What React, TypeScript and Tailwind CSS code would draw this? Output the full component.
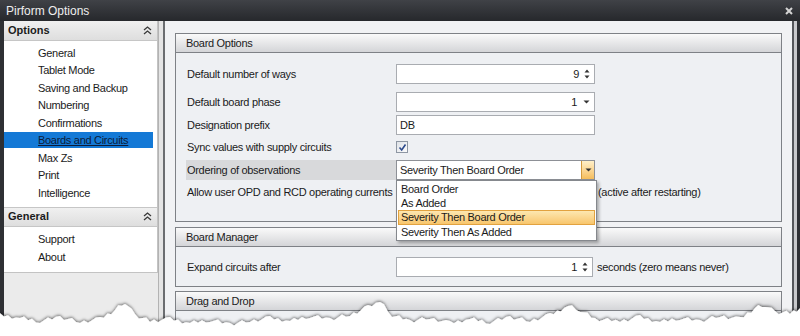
import type { ReactNode } from "react";

const navItems = [
  "General",
  "Tablet Mode",
  "Saving and Backup",
  "Numbering",
  "Confirmations",
  "Boards and Circuits",
  "Max Zs",
  "Print",
  "Intelligence"
];

const orderOptions = ["Board Order", "As Added", "Severity Then Board Order", "Severity Then As Added"];

export default function App() {
  return (
    <div className="relative h-[336px] w-[800px] overflow-hidden bg-[#2e3034] font-['Liberation_Sans',Arial,sans-serif] text-[11px] tracking-[-0.3px] text-[#1b1b1b]">
      <div className="flex h-[21px] items-center justify-between bg-gradient-to-b from-[#404247] to-[#26282c] pl-[6px] pr-[7px] text-[12px] tracking-normal text-[#eeeeee]">
        <span>Pirform Options</span>
        <CloseIcon />
      </div>

      <div className="flex h-[315px] pl-[4px]">
        <Sidebar />
        <div className="w-[7px] border-l border-r-2 border-l-[#b3b3b3] border-r-[#6b6d70] bg-[#e4e4e4]" />

        <div className="flex w-[627px] flex-col bg-[#f1f2f4] px-[10px] pt-[12px]">
          <Group title="Board Options">
            <div className="flex h-[168px] flex-col pl-[10px] pt-[11px]">
              <Row label="Default number of ways">
                <NumberBox value="9" />
              </Row>
              <Row label="Default board phase" className="mt-[8px]">
                <div className="flex h-[20px] w-[199px] items-center justify-end gap-[6px] border border-[#a9acb1] bg-white pr-[4px]">
                  <span>1</span>
                  <DownArrow />
                </div>
              </Row>
              <Row label="Designation prefix" className="mt-[3px]">
                <div className="flex h-[20px] w-[199px] items-center border border-[#a9acb1] bg-white pl-[3px]">DB</div>
              </Row>
              <Row label="Sync values with supply circuits" className="mt-[2px]">
                <Checkbox />
              </Row>
              <Row label="Ordering of observations" className="mt-[3px]" highlight>
                <div className="flex h-[20px] w-[199px] items-center justify-between border border-[#8d9096] bg-white pl-[3px]">
                  <span>Severity Then Board Order</span>
                  <div className="flex h-[18px] w-[13px] items-center justify-center border-l border-[#d39a3c] bg-gradient-to-b from-[#fff0c8] to-[#f5bd5a]">
                    <DownArrow />
                  </div>
                </div>
              </Row>
              <Row label="Allow user OPD and RCD operating currents" className="mt-[2px]">
                <div className="w-[199px]" />
                <span className="ml-[3px]">(active after restarting)</span>
              </Row>
            </div>
          </Group>

          <Group title="Board Manager" className="mt-[5px]">
            <div className="flex flex-col pb-[9px] pl-[10px] pt-[10px]">
              <Row label="Expand circuits after">
                <NumberBox value="1" width="w-[197px]" />
                <span className="ml-[4px]">seconds (zero means never)</span>
              </Row>
            </div>
          </Group>

          <Group title="Drag and Drop" className="mt-[4px] flex-1">
            <div className="h-[40px]" />
          </Group>
        </div>

        <div className="w-[8px] border-l-2 border-r-[3px] border-l-[#55575b] border-r-[#2e3034] bg-[#c8c9cc]" />
      </div>

      <div className="absolute left-[396px] top-[180px] w-[201px] border border-[#85888d] bg-white py-[1px] shadow-[2px_2px_3px_rgba(0,0,0,0.3)]">
        {orderOptions.map((option, i) => (
          <div
            key={option}
            className={
              i === 2
                ? "mx-[1px] flex h-[15px] items-center border border-[#e2a23f] bg-gradient-to-b from-[#fde7b0] to-[#f8c66c] pl-[2px]"
                : "flex h-[14px] items-center pl-[4px]"
            }
          >
            {option}
          </div>
        ))}
      </div>

      <TornEdge />
    </div>
  );
}

function Sidebar() {
  return (
    <div className="flex w-[154px] flex-col bg-[#ebebeb]">
      <div className="border-b border-r border-[#c3c3c3] bg-white">
        <SectionHeader title="Options" />
        <div className="flex flex-col pb-[5px] pt-[3px]">
          {navItems.map((item) =>
            item === "Boards and Circuits" ? (
              <div key={item} className="flex h-[17.5px] items-center">
                <div className="mr-[4px] flex h-[16px] flex-1 items-center bg-[#1479d6] pl-[34px] text-[#0d1b36] underline">
                  {item}
                </div>
              </div>
            ) : (
              <div key={item} className="flex h-[17.5px] items-center pl-[34px]">
                {item}
              </div>
            )
          )}
        </div>
        <SectionHeader title="General" bordered />
        <div className="flex flex-col pb-[6px] pt-[4px]">
          <div className="flex h-[17.5px] items-center pl-[34px]">Support</div>
          <div className="flex h-[17.5px] items-center pl-[34px]">About</div>
        </div>
      </div>
    </div>
  );
}

function SectionHeader({ title, bordered }: { title: string; bordered?: boolean }) {
  return (
    <div
      className={`flex h-[20px] items-center justify-between border-b border-[#c6c6c6] bg-gradient-to-b from-[#f0f0f0] to-[#dedede] pl-[4px] pr-[5px] text-[11px] font-bold tracking-normal ${
        bordered ? "border-t" : ""
      }`}
    >
      <span>{title}</span>
      <svg width="9" height="9" viewBox="0 0 9 9" fill="none" stroke="#3a3a3a" strokeWidth="1.3">
        <path d="M1 4 L4.5 1 L8 4 M1 8 L4.5 5 L8 8" />
      </svg>
    </div>
  );
}

function Group({ title, children, className = "" }: { title: string; children: ReactNode; className?: string }) {
  return (
    <div className={`border border-[#7e8186] ${className}`}>
      <div className="flex h-[19px] items-center border-b border-[#7e8186] bg-gradient-to-b from-[#fafafa] to-[#d4d5d8] pl-[10px]">
        {title}
      </div>
      <div className="bg-[#eef0f3]">{children}</div>
    </div>
  );
}

function Row({
  label,
  children,
  className = "",
  highlight
}: {
  label: string;
  children: ReactNode;
  className?: string;
  highlight?: boolean;
}) {
  return (
    <div className={`flex h-[20px] items-center ${className}`}>
      <div className={`flex h-[20px] w-[210px] shrink-0 items-center whitespace-nowrap pl-[1px] ${highlight ? "bg-[#d8d9db]" : ""}`}>
        {label}
      </div>
      {children}
    </div>
  );
}

function NumberBox({ value, width = "w-[199px]" }: { value: string; width?: string }) {
  return (
    <div className={`flex h-[20px] ${width} items-center justify-end gap-[5px] border border-[#a9acb1] bg-white pr-[4px]`}>
      <span>{value}</span>
      <svg width="6" height="12" viewBox="0 0 6 12" fill="#333">
        <path d="M0.5 4.5 L3 1.5 L5.5 4.5 Z M0.5 7.5 L3 10.5 L5.5 7.5 Z" />
      </svg>
    </div>
  );
}

function DownArrow() {
  return (
    <svg width="7" height="4" viewBox="0 0 7 4" fill="#333">
      <path d="M0.5 0.5 L6.5 0.5 L3.5 3.5 Z" />
    </svg>
  );
}

function Checkbox() {
  return (
    <div className="flex h-[12px] w-[12px] items-center justify-center border border-[#8e97a3] bg-gradient-to-br from-[#dfe3e8] to-[#fbfbfb]">
      <svg width="9" height="9" viewBox="0 0 9 9" fill="none" stroke="#2c4a8c" strokeWidth="1.6">
        <path d="M1.5 4.5 L3.7 7 L7.5 1.5" />
      </svg>
    </div>
  );
}

function CloseIcon() {
  return (
    <svg width="8" height="8" viewBox="0 0 8 8" stroke="#d4d4d4" strokeWidth="2">
      <path d="M1 1 L7 7 M7 1 L1 7" />
    </svg>
  );
}

const edgePoints: [number, number][] = [
  [0, 19], [20, 22], [40, 25], [60, 21], [80, 26], [100, 23], [115, 14], [125, 6], [135, 19],
  [150, 25], [170, 23], [190, 27], [210, 24], [230, 28], [250, 25], [270, 22], [290, 25],
  [310, 20], [330, 23], [350, 19], [368, 11], [380, 6], [392, 19], [410, 25], [430, 22],
  [450, 27], [470, 23], [490, 26], [510, 21], [530, 25], [550, 19], [568, 10], [580, 14],
  [595, 23], [620, 25], [640, 21], [660, 26], [680, 22], [700, 25], [720, 20], [740, 23],
  [755, 12], [765, 9], [775, 16], [790, 17], [800, 12]
];

function TornEdge() {
  const pts: string[] = [];
  for (let i = 0; i < edgePoints.length - 1; i++) {
    const [x1, y1] = edgePoints[i];
    const [x2, y2] = edgePoints[i + 1];
    const steps = Math.max(1, Math.round((x2 - x1) / 4));
    for (let s = 0; s < steps; s++) {
      const t = s / steps;
      const jitter = ((i * 7 + s * 13) % 5) - 2;
      pts.push(`${(x1 + (x2 - x1) * t).toFixed(1)},${(y1 + (y2 - y1) * t + jitter).toFixed(1)}`);
    }
  }
  pts.push("800,12");
  const d = `M0,40 L${pts.join(" L")} L800,40 Z`;
  return (
    <svg className="absolute bottom-0 left-0" width="800" height="40" viewBox="0 0 800 40">
      <defs>
        <filter id="torn-shadow" x="-5%" y="-50%" width="110%" height="200%">
          <feDropShadow dx="0" dy="-1" stdDeviation="1.4" floodColor="#000" floodOpacity="0.55" />
        </filter>
      </defs>
      <path d={d} fill="#ffffff" filter="url(#torn-shadow)" />
    </svg>
  );
}
